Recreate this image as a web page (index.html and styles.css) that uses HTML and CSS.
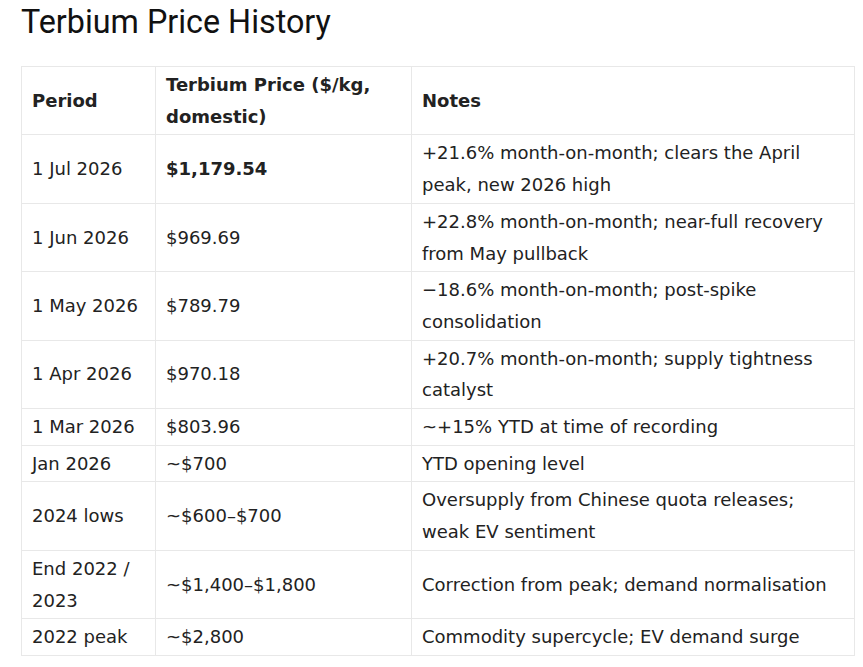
FILE: index.html
```html
<!DOCTYPE html>
<html lang="en">
<head>
<meta charset="utf-8">
<title>Terbium Price History</title>
<link rel="stylesheet" href="styles.css">
</head>
<body>
<main class="page">
  <h1 class="title">Terbium Price History</h1>
  <table class="price-table">
    <colgroup>
      <col class="col-period">
      <col class="col-price">
      <col class="col-notes">
    </colgroup>
    <thead>
      <tr>
        <th>Period</th>
        <th>Terbium Price ($/kg, domestic)</th>
        <th>Notes</th>
      </tr>
    </thead>
    <tbody>
      <tr><td>1 Jul 2026</td><td><strong>$1,179.54</strong></td><td>+21.6% month-on-month; clears the April peak, new 2026 high</td></tr>
      <tr><td>1 Jun 2026</td><td>$969.69</td><td>+22.8% month-on-month; near-full recovery from May pullback</td></tr>
      <tr><td>1 May 2026</td><td>$789.79</td><td>&minus;18.6% month-on-month; post-spike consolidation</td></tr>
      <tr><td>1 Apr 2026</td><td>$970.18</td><td>+20.7% month-on-month; supply tightness catalyst</td></tr>
      <tr><td>1 Mar 2026</td><td>$803.96</td><td>~+15% YTD at time of recording</td></tr>
      <tr><td>Jan 2026</td><td>~$700</td><td>YTD opening level</td></tr>
      <tr><td>2024 lows</td><td>~$600&ndash;$700</td><td>Oversupply from Chinese quota releases; weak EV sentiment</td></tr>
      <tr><td>End 2022 / 2023</td><td>~$1,400&ndash;$1,800</td><td>Correction from peak; demand normalisation</td></tr>
      <tr><td>2022 peak</td><td>~$2,800</td><td>Commodity supercycle; EV demand surge</td></tr>
    </tbody>
  </table>
</main>
</body>
</html>
```
FILE: styles.css
```css
html, body {
  margin: 0;
  padding: 0;
  background: #ffffff;
}

.page {
  padding: 3px 8px 0 21px;
  color: #222222;
  font-family: "DejaVu Sans", Verdana, sans-serif;
}

.title {
  margin: 0 0 25px 0;
  font-family: Roboto, "Liberation Sans", sans-serif;
  font-weight: 400;
  font-size: 32.3px;
  line-height: 38px;
  color: #111111;
}

.price-table {
  width: 834px;
  border-collapse: collapse;
  table-layout: fixed;
  font-size: 18px;
  line-height: 31.7px;
}

.col-period { width: 134px; }
.col-price { width: 256px; }

.price-table th,
.price-table td {
  border: 1px solid #e8e8e8;
  padding: 2px 10px;
  text-align: left;
  vertical-align: middle;
}

.price-table th {
  font-weight: 700;
}

.price-table strong {
  font-weight: 700;
}
```
